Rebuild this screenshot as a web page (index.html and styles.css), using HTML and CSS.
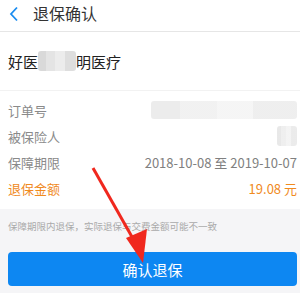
FILE: index.html
```html
<!DOCTYPE html>
<html lang="zh">
<head>
<meta charset="utf-8">
<link rel="stylesheet" href="styles.css">
</head>
<body>
<div class="page">
  <header class="bar">
    <svg class="back" width="12" height="16" viewBox="0 0 12 16"><path d="M9 1.5 L3 8 L9 14.5" fill="none" stroke="#1a8cf0" stroke-width="1.8"/></svg>
    <span class="title">退保确认</span>
  </header>
  <section class="card">
    <div class="company"><span>好医</span><span class="mosaic m1"></span><span>明医疗</span></div>
    <div class="rows">
      <div class="row"><span class="label">订单号</span><span class="mosaic m2"></span></div>
      <div class="row"><span class="label">被保险人</span><span class="mosaic m3"></span></div>
      <div class="row"><span class="label">保障期限</span><span class="value">2018-10-08 至 2019-10-07</span></div>
      <div class="row accent"><span class="label">退保金额</span><span class="value">19.08 元</span></div>
    </div>
  </section>
  <section class="foot">
    <p class="note">保障期限内退保，实际退保与交费金额可能不一致</p>
    <button class="confirm">确认退保</button>
  </section>
  <svg class="arrow" width="300" height="293" viewBox="0 0 300 293">
    <line x1="93" y1="168" x2="136" y2="244" stroke="#f0281e" stroke-width="3"/>
    <polygon points="126,238 147,229 143,263" fill="#f0281e"/>
  </svg>
</div>
</body>
</html>
```
FILE: styles.css
```css
* { box-sizing: border-box; margin: 0; padding: 0; }
html, body { width: 300px; height: 293px; overflow: hidden; }
body { font-family: "Noto Sans CJK SC", "Noto Sans", sans-serif; background: #f5f5f7; }
.page { position: relative; width: 300px; height: 293px; display: flex; flex-direction: column; }
.bar { height: 32px; background: #fff; border-bottom: 1px solid #e6e6e6; display: flex; align-items: center; padding-left: 8px; }
.back { margin-right: 13px; margin-top: -4px; }
.title { font-size: 16px; color: #333; margin-top: -5px; }
.card { background: #fff; }
.company { height: 59px; display: flex; align-items: center; padding-left: 8px; font-size: 15px; color: #222; border-bottom: 1px solid #f2f2f2; }
.mosaic { display: inline-block; background: linear-gradient(90deg, #d9d9d9 0 20%, #e4e4e4 20% 45%, #ececec 45% 70%, #dedede 70% 100%); border-radius: 3px; }
.m1 { width: 38px; height: 20px; }
.m2 { width: 146px; height: 18px; opacity: .5; }
.m3 { width: 20px; height: 20px; opacity: .6; }
.rows { padding: 6px 0 8px; }
.row { height: 26px; display: flex; align-items: center; justify-content: space-between; padding: 0 3px 0 8px; font-size: 13px; color: #8a8a8a; }
.value { color: #808080; }
.accent .label, .accent .value { color: #f08a1e; }
.foot { flex: 1; padding: 0 3px 0 8px; }
.note { font-size: 9.5px; color: #aaa; margin-top: 10px; line-height: 14px; }
.confirm { display: block; width: 100%; height: 34px; margin-top: 19px; border: none; border-radius: 4px; background: #0d87f2; color: #fff; font-family: inherit; font-size: 15px; }
.arrow { position: absolute; left: 0; top: 0; pointer-events: none; }
```
